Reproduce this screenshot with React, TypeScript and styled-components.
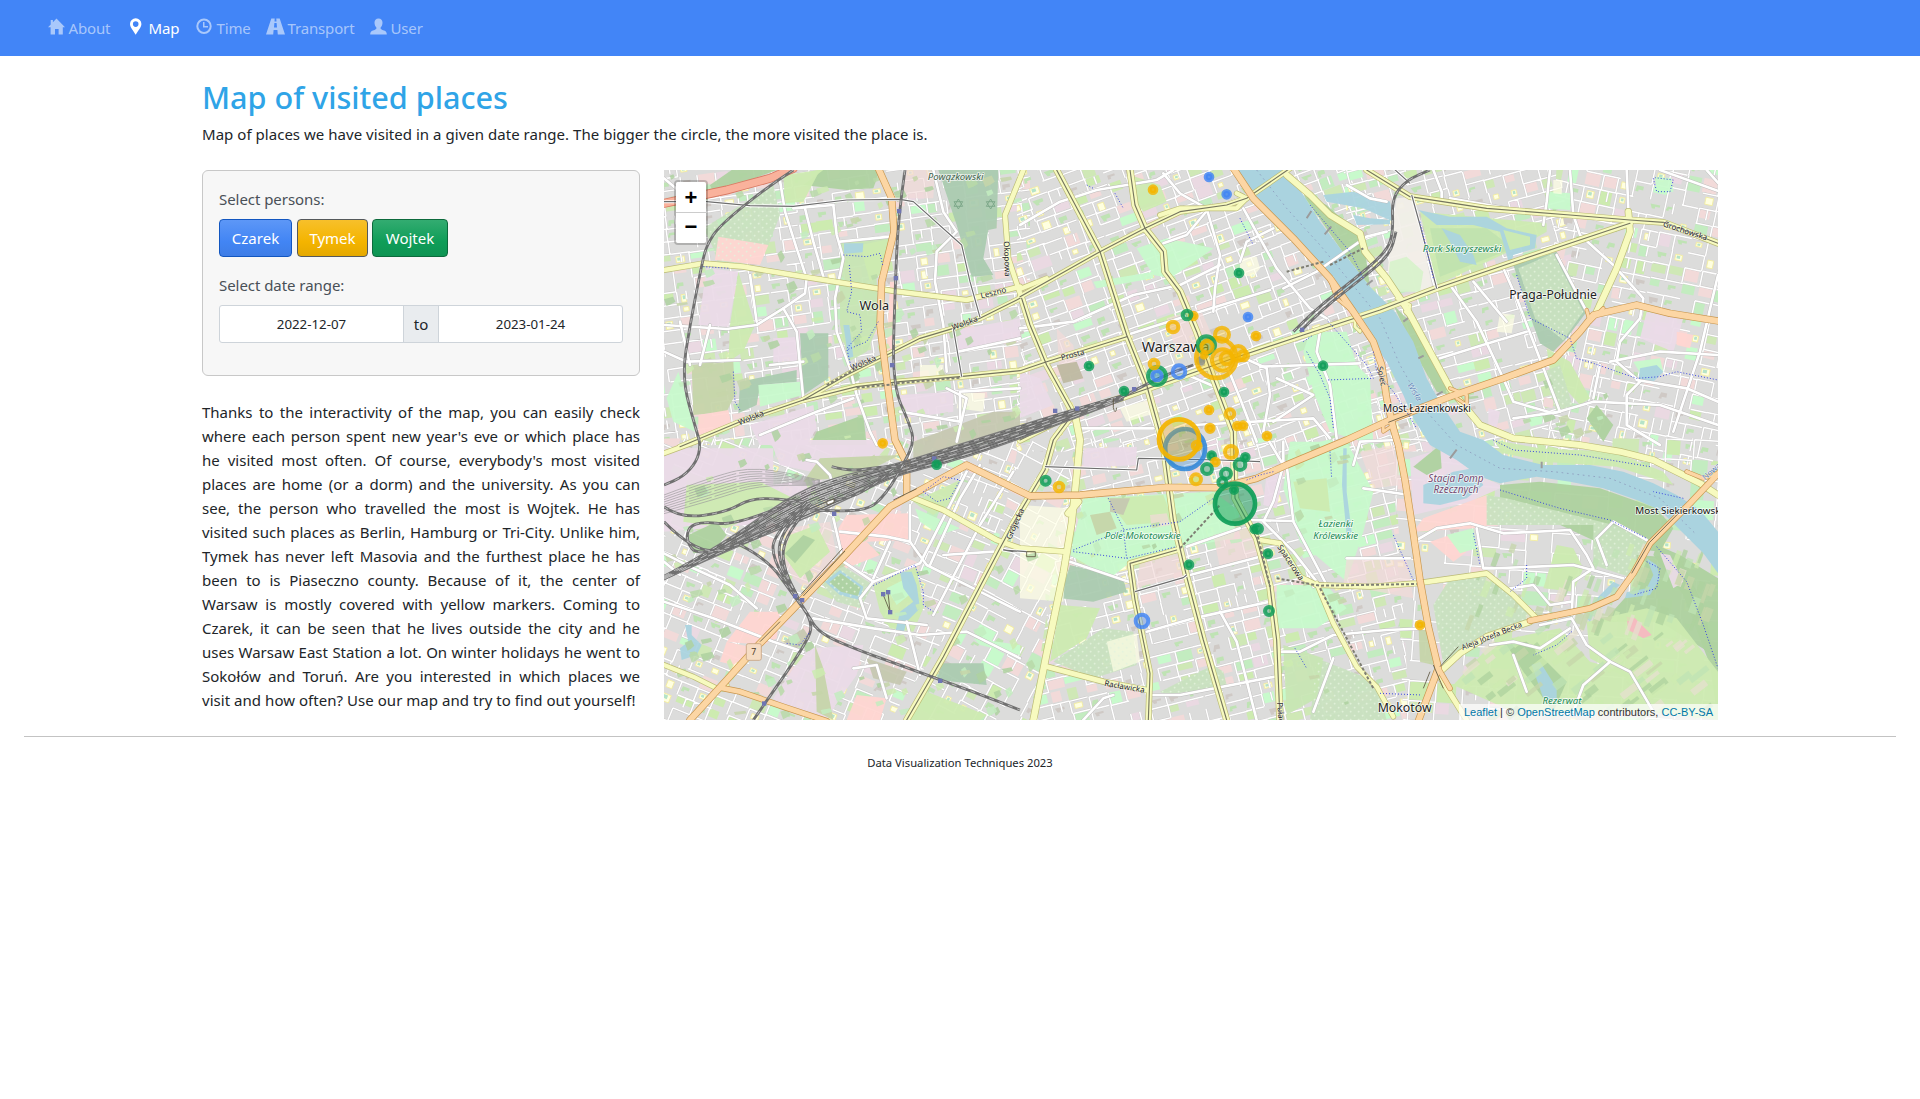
import React from "react";
import styled, { createGlobalStyle } from "styled-components";

const GlobalStyle = createGlobalStyle`
  * { box-sizing: border-box; }
  body {
    margin: 0;
    background: #fff;
    color: #212529;
    font-family: "Segoe UI", "Noto Sans", "Open Sans", sans-serif;
    font-size: 15px;
    line-height: 24px;
  }
`;

/* ---------- page parts ---------- */

const NavBar = styled.nav`
  display: flex;
  align-items: center;
  height: 56px;
  padding: 0 40px;
  background: #4285f7;
`;

const NavLink = styled.a<{ $active?: boolean; $width: number }>`
  display: flex;
  align-items: center;
  gap: 4px;
  width: ${(p) => p.$width}px;
  padding: 0 8px;
  color: ${(p) => (p.$active ? "#fff" : "rgba(255, 255, 255, 0.55)")};
  letter-spacing: -0.15px;
  white-space: nowrap;
  text-decoration: none;
  svg {
    flex: none;
    width: 17px;
    height: 17px;
    margin-top: -3px;
    margin-right: -0.5px;
    fill: currentColor;
  }
`;

const Container = styled.main`
  width: 1516px;
  margin: 0 auto;
`;

const Title = styled.h1`
  margin: 0;
  padding-top: 22px;
  color: #2fa4e7;
  font-size: 30.6px;
  font-weight: 500;
  line-height: 38px;
`;

const Lead = styled.p`
  margin: 6px 0 24px;
  letter-spacing: 0.035px;
`;

const Columns = styled.div`
  display: grid;
  grid-template-columns: 438px 1054px;
  column-gap: 24px;
`;

const Panel = styled.section`
  height: 206px;
  padding: 16px 16px;
  border: 1px solid #c8c8c8;
  border-radius: 6px;
  background: #f7f7f7;
`;

const Label = styled.div`
  height: 24px;
  margin-bottom: 8px;
  color: #495057;
  letter-spacing: -0.05px;
`;

const ButtonRow = styled.div`
  display: flex;
  height: 38px;
  margin-bottom: 16px;
`;

const PersonButton = styled.button<{ $bg: string; $line: string; $width: number; $gap: number }>`
  width: ${(p) => p.$width}px;
  height: 38px;
  margin-right: ${(p) => p.$gap}px;
  padding: 0;
  border: 1px solid ${(p) => p.$line};
  border-radius: 4px;
  background: ${(p) => p.$bg};
  color: #fff;
  font: inherit;
`;

const DateRange = styled.div`
  display: grid;
  grid-template-columns: 183px 36px 183px;
  width: 404px;
  height: 38px;
  border: 1px solid #ced4da;
  border-radius: 3px;
  overflow: hidden;
  background: #fff;
  text-align: center;
  line-height: 37px;
`;

const DateCell = styled.span`
  font-size: 13.3px;
`;

const DateJoin = styled.span`
  border: solid #ced4da;
  border-width: 0 1px;
  background: #e9ecef;
`;

const Story = styled.p`
  margin: 24px 0 0;
`;

const StoryLine = styled.span<{ $last?: boolean }>`
  display: block;
  height: 24px;
  white-space: nowrap;
  text-align: justify;
  text-align-last: ${(p) => (p.$last ? "left" : "justify")};
  letter-spacing: ${(p) => (p.$last ? "0.04px" : "0")};
`;

const MapFrame = styled.section`
  position: relative;
  height: 550px;
  overflow: hidden;
  background: #ddd;
`;

const MapSvg = styled.svg`
  display: block;
  width: 1054px;
  height: 550px;
  font-family: "Noto Sans", sans-serif;
`;

const ZoomControl = styled.div`
  position: absolute;
  top: 10px;
  left: 10px;
  width: 34px;
  border: 2px solid rgba(0, 0, 0, 0.2);
  border-radius: 4px;
  background-clip: padding-box;
`;

const ZoomButton = styled.button<{ $upper?: boolean }>`
  display: flex;
  align-items: center;
  justify-content: center;
  width: 30px;
  height: ${(p) => (p.$upper ? 31 : 30)}px;
  padding: ${(p) => (p.$upper ? "2px 0 0" : "0 0 2px")};
  border: 0;
  border-bottom: ${(p) => (p.$upper ? "1px solid #ccc" : "0")};
  border-radius: ${(p) => (p.$upper ? "2px 2px 0 0" : "0 0 2px 2px")};
  background: #fff;
  color: #000;
  font: bold 22px/28px "Liberation Sans", Arial, sans-serif;
`;

const Attribution = styled.div`
  position: absolute;
  right: 0;
  bottom: 0;
  padding: 0 5px;
  background: rgba(255, 255, 255, 0.7);
  color: #333;
  font: 11px/16px "Liberation Sans", Arial, sans-serif;
  white-space: nowrap;
  a { color: #0078a8; text-decoration: none; }
`;

const Footer = styled.footer`
  margin: 16px 24px 0;
  padding-top: 14px;
  border-top: 1px solid #c3c3c3;
  font-size: 11.25px;
  text-align: center;
`;

/* ---------- map data (three units per pixel) ---------- */

type District = { clip: string; x: number; y: number; w: number; h: number; angle: number; gx: number; gy: number };

const districts: District[] = [
  { clip: "0,0 1110,0 1110,840 0,840", x: 0, y: 0, w: 1110, h: 840, angle: -8, gx: 56, gy: 38 },
  { clip: "1070,0 2100,0 2300,860 1070,860", x: 1070, y: 0, w: 1200, h: 860, angle: -20, gx: 60, gy: 36 },
  { clip: "2050,0 2700,0 2760,500 2680,860 2100,860", x: 2050, y: 0, w: 760, h: 860, angle: -15, gx: 56, gy: 40 },
  { clip: "2690,0 3180,0 3180,900 2640,900", x: 2640, y: 0, w: 560, h: 900, angle: 12, gx: 50, gy: 46 },
  { clip: "0,820 1080,820 1000,1200 680,1680 0,1680", x: 0, y: 820, w: 1080, h: 860, angle: 22, gx: 54, gy: 42 },
  { clip: "1080,820 1000,1200 740,1680 1140,1680 1280,860", x: 740, y: 820, w: 540, h: 860, angle: 28, gx: 60, gy: 46 },
  { clip: "1240,820 2200,820 2250,1680 1110,1680", x: 1110, y: 820, w: 1150, h: 860, angle: -14, gx: 56, gy: 38 },
  { clip: "2200,820 3180,820 3180,1680 2230,1680", x: 2200, y: 820, w: 1000, h: 860, angle: 4, gx: 80, gy: 60 },
];

const areas: [string, string][] = [
  ["#aed1a0", "12,100 60,90 200,70 350,15 215,15 150,60 40,95"],
  ["#c9e1bf", "130,190 340,60 360,150 325,240 240,300 175,300 160,250"],
  ["#ffd6d1", "175,215 325,240 300,300 165,285"],
  ["#aed1a0", "490,15 660,15 640,70 560,75 430,60"],
  ["#cdebb0", "370,30 480,15 430,110 375,115"],
  ["#ebdbe8", "140,310 235,320 205,485 115,480"],
  ["#cdebb0", "235,320 285,480 250,560 205,590 210,480"],
  ["#c8e6b4", "540,230 690,220 650,340 655,480 620,560 565,590 540,480"],
  ["#cdebb0", "600,240 690,222 660,330 630,350"],
  ["#aad3df", "552,235 610,235 608,262 552,266"],
  ["#aad3df", "550,480 568,480 580,575 565,580"],
  ["#aacbaf", "835,15 1015,15 1010,190 985,195 970,280 1000,330 935,335 890,180"],
  ["#f2dad9", "735,15 825,15 820,100 730,100"],
  ["#ffd6d1", "690,350 712,350 700,570 680,560"],
  ["#ebdbe8", "895,495 1080,460 1080,520 895,560"],
  ["#ebdbe8", "340,520 430,515 430,590 340,590"],
  ["#aacbaf", "420,505 505,505 505,640 430,690"],
  ["#c6d5a9", "95,600 220,590 225,690 200,740 100,750"],
  ["#c8facc", "55,620 20,700 40,770 105,800 80,700"],
  ["#aacbaf", "240,650 410,615 410,650 300,660 290,720 235,745"],
  ["#c8facc", "295,660 420,650 430,690 300,725"],
  ["#ffd6d1", "115,750 205,735 215,780 115,810"],
  ["#ebdbe8", "270,780 460,720 470,790 440,840 300,840"],
  ["#add19e", "470,800 610,750 620,840 450,840"],
  ["#ebdbe8", "720,690 880,680 880,740 730,760"],
  ["#ffffe5", "780,600 850,600 850,650 780,645"],
  ["#ffffe5", "900,680 975,685 970,740 890,730"],
  ["#c6c8b0", "760,830 1000,740 1080,740 1080,790 860,860 760,890"],
  ["#ebdbe8", "12,850 340,850 340,960 500,930 430,1010 260,1080 12,1100"],
  ["#cdebb0", "80,960 300,950 400,1000 200,1090 70,1070"],
  ["#add19e", "85,1110 170,1070 200,1110 160,1160 100,1165"],
  ["#ebdbe8", "330,825 700,825 640,890 500,930 360,900"],
  ["#c6d5a9", "480,880 720,870 600,930 430,950"],
  ["#ffd6d1", "535,1090 560,1050 750,1045 750,1125 620,1130 660,1170 545,1215"],
  ["#f2dad9", "380,1090 510,1070 530,1170 450,1280 400,1240 365,1180"],
  ["#cdebb0", "390,1110 470,1080 510,1160 420,1240 370,1170"],
  ["#aed1a0", "430,1110 465,1125 405,1195 375,1165"],
  ["#c9e1bf", "480,1250 545,1200 640,1260 600,1330 530,1310"],
  ["#aad3df", "495,1250 540,1215 610,1265 600,1305 540,1290"],
  ["#aed1a0", "508,1252 542,1225 602,1268 594,1293 543,1280"],
  ["#ffd6d1", "270,1340 360,1340 350,1420 310,1440 200,1430"],
  ["#ffd6d1", "200,1430 290,1450 220,1500 180,1490"],
  ["#ebdbe8", "450,1450 610,1440 590,1530 540,1600 500,1665 380,1640 340,1600 400,1510"],
  ["#c6d5a9", "465,1440 490,1510 520,1665 470,1640"],
  ["#c6c8b0", "370,1430 430,1390 450,1420 410,1450"],
  ["#ffd6d1", "590,1590 680,1600 660,1665 560,1665"],
  ["#c6c8b0", "620,1480 740,1520 720,1560 640,1540"],
  ["#aad3df", "75,1380 95,1380 95,1410 125,1440 110,1470 65,1485 60,1450 85,1430"],
  ["#cdebb0", "640,1260 770,1205 790,1330 760,1400 690,1390 660,1340"],
  ["#c8facc", "680,1270 740,1240 760,1280 710,1320"],
  ["#aad3df", "720,1220 755,1220 770,1260 780,1330 740,1370 730,1405 706,1400 720,1340 760,1310 730,1270"],
  ["#cdebb0", "760,1010 900,945 900,1000 820,1050 780,1025"],
  ["#c8facc", "765,1030 900,1090 840,1110 780,1070"],
  ["#aacbaf", "845,1495 970,1495 980,1560 830,1545"],
  ["#cdebb0", "800,1580 980,1650 960,1665 750,1665"],
  ["#c8facc", "940,1420 1080,1440 1080,1470 960,1440"],
  ["#c8facc", "1430,250 1520,220 1660,250 1590,300 1530,340 1480,330"],
  ["#cdebb0", "1410,30 1500,60 1520,110 1450,140 1420,100"],
  ["#c8facc", "1300,350 1480,320 1480,340 1310,370"],
  ["#ffffe5", "1740,280 1790,275 1800,310 1780,335 1740,330"],
  ["#f2dad9", "1520,460 1620,430 1660,520 1550,570"],
  ["#f2dad9", "1190,490 1240,540 1250,620 1200,650"],
  ["#bdb9a0", "1190,600 1250,590 1270,640 1210,655"],
  ["#c8facc", "1950,500 2060,500 2090,600 2130,640 2140,840 2010,800 1960,680 1930,560"],
  ["#ffffe5", "1380,730 1480,700 1500,740 1400,770"],
  ["#ebdbe8", "1080,620 1140,640 1180,720 1080,760"],
  ["#ebdbe8", "1270,850 1430,845 1430,900 1270,910"],
  ["#c8facc", "1270,1000 1660,980 1740,1040 1720,1120 1560,1150 1400,1200 1350,1240 1230,1170"],
  ["#cdebb0", "1340,1000 1510,990 1540,1070 1400,1080"],
  ["#c6d5a9", "1290,1050 1350,1040 1370,1090 1310,1110"],
  ["#c6c8b0", "1350,1000 1410,1000 1390,1050 1350,1040"],
  ["#f2dad9", "1470,1050 1520,1045 1530,1080 1475,1090"],
  ["#f2dad9", "1440,1190 1570,1160 1570,1230 1430,1270"],
  ["#aacbaf", "1230,1200 1390,1240 1400,1280 1300,1310 1200,1300"],
  ["#cdebb0", "1200,1320 1320,1330 1280,1420 1170,1490"],
  ["#c9e1bf", "1180,1490 1330,1390 1420,1400 1430,1500 1300,1540"],
  ["#ffffe5", "1340,1430 1430,1405 1440,1490 1360,1520"],
  ["#ffffe5", "1230,1030 1080,1020 1080,1300 1210,1310"],
  ["#c9e1bf", "1500,1580 1660,1500 1690,1520 1700,1560 1520,1590"],
  ["#f2dad9", "1660,1110 1790,1080 1800,1170 1680,1210"],
  ["#c8facc", "1890,830 2060,830 2140,980 2110,1100 2060,1250 1920,1130 1870,970"],
  ["#cdebb0", "1900,950 2000,940 2010,1040 1920,1030"],
  ["#aad3df", "2050,850 2060,850 2060,980 2075,1100 2060,1110 2046,960"],
  ["#ebdbe8", "1820,920 1870,930 1850,1030 1810,1020"],
  ["#f2dad9", "2100,860 2200,840 2225,960 2140,970"],
  ["#f2dad9", "2060,1180 2240,1180 2260,1300 2050,1260"],
  ["#c8facc", "1850,1260 2000,1260 2060,1330 1970,1390 1850,1390"],
  ["#c9e1bf", "1970,1480 2150,1550 2180,1665 1950,1665"],
  ["#c8e6b4", "1870,1440 1990,1480 1970,1600 1880,1650"],
  ["#f2efe9", "2210,100 2260,95 2320,380 2180,370 2190,220"],
  ["#d8f2cc", "2190,290 2240,275 2290,320 2280,380 2210,380 2185,340"],
  ["#cdebb0", "2280,140 2660,175 2660,200 2590,240 2330,360"],
  ["#c0e2ae", "2310,190 2480,190 2560,250 2340,335"],
  ["#aad3df", "2275,135 2370,155 2480,155 2540,190 2630,210 2625,250 2560,270 2550,305 2520,200 2440,180 2330,180"],
  ["#cdebb0", "2530,195 2610,215 2610,240 2550,255"],
  ["#aad3df", "2345,190 2400,210 2440,270 2450,300 2400,290 2370,230"],
  ["#aacbaf", "2560,300 2690,260 2780,440 2720,520 2680,560 2640,535 2620,480"],
  ["#c9e1bf", "2575,310 2680,265 2770,440 2710,525 2625,460"],
  ["#cdebb0", "2660,550 2730,590 2790,700 2760,720 2670,620"],
  ["#c9e1bf", "2650,620 2700,600 2740,730 2690,740"],
  ["#c8facc", "2660,80 2735,85 2730,135 2655,130"],
  ["#ffffe5", "2680,45 2708,45 2705,88 2680,85"],
  ["#c8facc", "2985,35 3035,40 3040,80 2990,85"],
  ["#ebdbe8", "2960,440 3070,460 3040,560 2940,520"],
  ["#ffd6d1", "3050,500 3100,510 3090,550 3050,540"],
  ["#ffffe5", "2520,445 2565,450 2555,505 2510,500"],
  ["#add19e", "2810,720 2860,780 2830,830 2780,760"],
  ["#c8facc", "2920,590 3000,580 3010,620 2950,640"],
  ["#aad3df", "2940,610 2990,600 3010,620 2980,650 2935,645"],
  ["#ebdbe8", "2485,730 2520,740 2510,790 2485,780"],
  ["#add19e", "2200,420 2260,480 2320,600 2370,690 2330,680 2280,590"],
  ["#add19e", "1930,90 2000,120 2110,220 2130,365 2040,250"],
  ["#aad3df", "1990,90 2080,80 2190,110 2200,170 2110,130 2000,110"],
  ["#aad3df", "2080,150 2130,160 2190,165 2190,178 2090,180"],
  ["#ebdbe8", "2250,880 2350,850 2440,920 2530,965 2430,1010 2260,1050"],
  ["#aad3df", "2290,960 2380,920 2440,910 2470,960 2420,1000 2340,1020 2290,1015"],
  ["#ffd6d1", "2290,1060 2480,990 2490,1080 2440,1090 2260,1100"],
  ["#ffd6d1", "2310,1130 2370,1110 2420,1160 2380,1190"],
  ["#c8facc", "2360,1110 2440,1090 2450,1150 2400,1165"],
  ["#add19e", "2520,960 2640,950 2820,970 2990,1030 3040,1090 3000,1160 2830,1140 2680,1070 2520,1000"],
  ["#c9e1bf", "2480,990 2540,1000 2900,1090 2970,1130 2920,1240 2800,1200 2800,1080 2480,1080"],
  ["#c9e1bf", "2370,1240 2480,1230 2560,1300 2630,1360 2400,1460 2350,1500 2320,1320"],
  ["#add19e", "2990,1140 3060,1170 3174,1240 3174,1665 3150,1500 3070,1290 2980,1170"],
  ["#add19e", "2930,1170 3060,1180 3130,1320 3160,1470 3000,1370 2830,1370 2930,1260"],
  ["#cdebb0", "2780,1370 2960,1330 3050,1360 3174,1520 3174,1665 2960,1640 2900,1540 2790,1480"],
  ["#cdebb0", "2500,1430 2700,1390 2790,1490 2900,1520 2960,1640 2560,1640 2380,1560"],
  ["#add19e", "2540,1440 2600,1430 2670,1500 2720,1550 2680,1640 2650,1600 2590,1520"],
  ["#aad3df", "2615,1500 2640,1490 2690,1570 2690,1610 2650,1600"],
  ["#aad3df", "2960,1180 2990,1200 3000,1240 2970,1290 2895,1300 2900,1282 2960,1270 2980,1230"],
  ["#aad3df", "2780,1360 2800,1310 2860,1250 2880,1260 2810,1320 2790,1370"],
  ["#ebdbe8", "3000,1165 3030,1170 3070,1250 3040,1270"],
  ["#f8b8c0", "2900,1355 2925,1360 2975,1410 2950,1420 2905,1395"],
  ["#cdebb0", "2690,1140 2740,1150 2770,1210 2740,1280 2650,1270"],
  ["#cdebb0", "2500,825 2640,850 2860,860 3010,920 3040,960 2870,905 2650,890 2530,865"],
  ["#c6d5a9", "2275,1370 2310,1370 2320,1500 2280,1490"],
  ["#add19e", "2340,840 2345,910 2300,930 2260,905"],
];

const river =
  "1720,15 1790,110 1900,215 1980,290 2020,335 2080,430 2130,520 2180,590 2230,690 2260,760 2310,840 2390,885 2460,935 2520,955 2630,935 2730,950 2830,970 2930,1005 3000,1035 3060,1095 3130,1165 3174,1225 3174,1100 3120,1035 3050,990 2980,955 2890,920 2790,900 2650,900 2530,870 2470,825 2400,800 2345,720 2300,640 2260,530 2205,440 2130,365 2040,250 1980,170 1930,90 1870,15";

const whiteRoads = [
  "12,40 60,80", "355,15 375,140 410,250 440,340 435,385 370,430 290,480 200,492 12,480",
  "370,430 410,500 430,700", "435,130 460,230 490,335", "520,120 530,210 550,280 525,400 530,500 570,610 590,690 630,800 650,840",
  "820,15 850,140 890,200 830,260 825,350 850,480 860,620", "400,130 520,120", "540,230 690,215",
  "12,560 80,590 240,585", "430,590 330,600", "580,700 470,740 300,810", "895,560 1080,520", "720,740 900,770 900,680 1080,670",
  "860,670 920,700 890,830", "60,470 90,600", "150,480 120,600", "270,330 290,470", "1080,180 1200,110 1310,75 1490,45 1540,15",
  "1080,490 1240,470 1420,390 1560,360 1680,300", "1510,25 1560,85 1640,130 1680,270 1665,370 1660,440", "1510,235 1580,210 1655,120",
  "1750,130 1800,220 1850,310 1950,430 2000,460", "1870,370 1970,320 2120,215 2180,200", "1400,510 1620,440 1830,375",
  "1840,190 1760,230 1740,290", "1700,600 1740,700 1790,830", "1720,565 1820,610 1830,690 1810,800 1870,900", "1800,605 1950,600 2100,595",
  "1980,500 1970,560 2010,660 2030,820", "1560,620 1700,570", "1440,650 1560,620 1700,680", "1260,790 1480,790",
  "1600,780 1960,760 2010,820", "1840,770 1960,690 1850,640", "1870,830 1870,900 1840,1010 1810,1070 1900,1160 1970,1250 1960,1265",
  "1880,900 1900,1070 2000,1260", "1760,1065 1900,1068", "1580,1145 1740,1090", "1590,1230 1800,1175", "1460,1400 1600,1360 1830,1310",
  "1470,1590 1560,1590 1870,1530", "1680,1340 1730,1430 1790,1665", "1230,1190 1420,1255", "1360,1590 1330,1600 1270,1665",
  "1860,1460 1920,1460 2020,1410 2180,1395 2300,1390", "2020,1480 1960,1640", "2110,970 2250,990", "2060,1180 2250,1180",
  "2210,825 2100,830 2080,900", "2180,110 2130,100 2060,60", "2320,15 2345,80 2345,110", "2370,100 2540,130 2620,145",
  "2730,15 2740,150 2760,210 2860,300 2950,400 2940,460 2880,530 2870,590", "2670,15 2660,110 2650,180", "2900,15 2905,130",
  "3140,15 3180,60", "3000,15 3180,80", "3174,330 3120,560 3040,800", "2850,590 3000,560 3174,570", "2530,310 2570,400 2620,530 2700,740 2560,760",
  "2370,360 2450,470 2530,640 2560,710 2680,745 2800,710 3000,720 3174,780", "2340,580 2500,530 2600,500", "2440,350 2540,470",
  "2820,600 2800,700", "2870,590 2940,650 2900,690 2900,780 3000,840", "2930,645 3080,670 3174,710", "2690,270 2780,440",
  "2270,1125 2330,1090 2430,1075 2530,1105 2730,1095 2780,1170 2800,1210 2740,1250 2735,1350", "2450,1090 2470,1210 2500,1210 2740,1200 2890,1240",
  "2550,1270 2620,1260 2670,1320 2735,1310", "2810,1120 2860,1070 2960,1125", "2810,1120 2840,1200", "2640,1380 2735,1360 2780,1440 2850,1490 2910,1520 2980,1640",
  "2490,1440 2560,1430 2640,1450 2730,1390", "2850,1490 2770,1560 2740,1640", "2560,1470 2600,1580",
  "12,1165 100,1210 210,1260 290,1330", "12,1310 160,1360 340,1430 430,1460", "440,885 470,890 510,930 530,1010", "12,1190 60,1230",
  "540,1100 680,1115 750,1130 800,1200 960,1280 1080,1340", "640,1250 780,1195 870,1020 920,920", "520,1060 550,1190 640,1250",
  "750,1020 750,1130", "810,1200 900,1000 960,900", "850,1170 1000,1160", "460,1360 640,1390 780,1410 920,1400 1080,1480",
  "640,1250 600,1300 620,1360 800,1380", "690,1130 640,1240", "820,1350 960,1080 1060,920", "580,1510 650,1500 680,1600", "740,1370 780,1530",
];

type Road = { d: string; w?: number; tram?: boolean };

const yellowRoads: Road[] = [
  { d: "12,315 130,295 250,305 430,335 700,378 920,405 1080,365" },
  { d: "1080,372 1160,340", w: 14 },
  { d: "1080,395 1160,350 1320,260 1455,190 1560,140 1700,120 1760,100 1890,10", tram: true },
  { d: "1500,150 1560,130 1730,130 1760,100 1730,85", w: 14 },
  { d: "60,845 240,770 430,705 560,630 700,560 780,520 880,490 960,460 1080,400", tram: true },
  { d: "430,705 590,665 720,650 900,635 1080,617 1160,590 1400,515", w: 16, tram: true },
  { d: "1090,15 1035,150 1045,280 1080,385" },
  { d: "1085,400 1110,480 1160,600 1240,745 1180,825 1155,915 1060,1075 1020,1150 850,1475 740,1665", w: 18, tram: true },
  { d: "1245,750 1260,825 1250,930 1235,1075 1210,1225 1160,1465 1120,1665", w: 20 },
  { d: "1190,15 1320,260 1400,510 1460,660 1510,840 1540,1065 1580,1235 1630,1425 1700,1665", w: 18, tram: true },
  { d: "1410,15 1425,120 1455,190 1510,260 1515,320 1560,380 1610,500 1660,640 1720,800 1725,1000 1790,1120 1830,1265 1850,1425 1860,1665", w: 19, tram: true },
  { d: "1080,825 1240,745 1380,700 1580,630 1720,580 1930,510 2160,435 2330,370 2550,295 2730,235 2910,175", w: 18, tram: true },
  { d: "1880,30 1950,90 2010,150 2100,205 2115,260 2180,340 2240,430 2310,560 2370,670 2460,780 2560,820 2680,832 2760,840 2880,860 2980,885 3120,955 3174,990", w: 19 },
  { d: "2120,15 2250,95 2480,130 2730,150 2910,165 3010,172 3174,235", w: 17, tram: true },
  { d: "2905,140 2910,200 2870,310 2810,440", w: 19 },
  { d: "750,995 850,1035 1010,1125 1080,1150 1220,1160", w: 16 },
  { d: "1255,1010 1225,1045", w: 20 },
  { d: "1550,1155 1410,1195 1425,1305 1470,1525 1465,1665", w: 16, tram: true },
  { d: "1160,1505 1330,1550 1460,1575", w: 16 },
  { d: "1800,1125 1860,1135 1920,1235 1970,1260 2130,1265 2270,1255 2480,1225 2560,1290 2630,1360", w: 15 },
  { d: "1970,1255 2020,1375 2090,1505 2150,1565 2200,1655", w: 14 },
  { d: "2330,1520 2420,1665", w: 16 },
  { d: "12,1500 100,1535 170,1570 200,1560", w: 14 },
  { d: "12,865 120,825", w: 14 },
  { d: "2330,1530 2400,1465 2480,1415 2610,1370", w: 18 },
  { d: "2210,400 2250,420 2245,450 2235,440", w: 9 },
  { d: "2080,460 2110,480 2100,500 2085,485 2085,455", w: 9 },
];

const orangeRoads: Road[] = [
  { d: "655,10 695,100 702,200 665,350 660,480 680,640 705,825 740,895 740,985", w: 19 },
  { d: "90,1665 200,1545 300,1435 430,1300 560,1165 690,1025 920,900 1110,993 1260,990 1520,967 1680,968 1790,940 1880,900 2060,825 2190,765 2370,695 2530,640 2680,585 2760,500 2800,450 2930,420 3030,445 3174,468", w: 19 },
  { d: "180,1568 240,1580 370,1625 500,1668", w: 16 },
  { d: "1720,10 1780,100 1900,220 2010,340 2080,440 2140,530 2165,600 2180,700 2200,790 2215,840 2235,945 2260,1105 2280,1245 2305,1385 2335,1510 2275,1668", w: 19 },
  { d: "3180,920 3090,1015 2970,1135 2920,1225 2870,1295 2790,1330 2610,1367", w: 17 },
  { d: "2335,1510 2370,1570", w: 14 },
  { d: "3080,920 3130,940 3174,925", w: 11 },
  { d: "2370,670 2420,690 2420,720 2390,700", w: 9 },
  { d: "2190,750 2200,780 2170,800 2170,770", w: 9 },
  { d: "2010,345 2030,400 2090,450", w: 9 },
  { d: "2780,435 2790,470 2830,430", w: 10 },
];

const rails = [
  "400,15 330,60 180,180 140,240 125,300 90,480 65,640 110,800 122,840 110,890 70,935 12,960",
  "735,15 715,150 705,380 697,660 750,780 762,830 735,890 680,985 620,1040 450,1035",
  "12,1025 60,1060 200,1042 280,995 430,1010",
  "12,1070 110,1170 240,1140 350,1090 440,1010",
  "190,1155 110,1170 80,1130 85,1085 130,1070 220,1080 420,1005",
  "240,1140 320,1180 400,1290 460,1370 440,1435 280,1665",
  "440,1020 370,1090 350,1180 410,1290",
  "420,1030 340,1110 338,1180 400,1285",
  "455,1015 400,1080 366,1150 375,1220 415,1300",
  "400,1280 445,1350 470,1395 540,1435 800,1530 940,1580 1080,1635",
  "515,905 570,920 660,905 730,905",
  "500,1010 570,1000 640,960 700,915",
  "1380,700 1490,640 1600,600",
  "1900,500 1970,430 2080,345 2180,260 2200,200 2195,100 2240,45 2310,15",
  "1920,500 1990,430 2100,345 2190,270 2208,200",
];

const yardLines: string[] = [];
for (let i = -6; i <= 6; i++) {
  const o = i * 5;
  yardLines.push(
    `12,${1238 + i} 180,${1155 + o * 0.4} 400,${1030 + o * 1.5} 560,${965 + o * 1.3} 700,${917 + o * 0.55} 860,${872 + o * 0.75} 1020,${822 + o * 0.7} 1240,${747 + o * 0.5} 1390,${697 + o * 0.25}`
  );
}
const sidings: string[] = [];
for (let i = 0; i < 9; i++) {
  sidings.push(`12,${990 + i * 7} 170,${930 + i * 9} 290,${905 + i * 7} 480,${945 + i * 2}`);
}

const tramLines = [
  "12,110 140,110 270,122 400,124 560,105 720,103 760,110 905,240 930,350 960,457",
  "880,490 905,635", "1155,905 1430,915 1435,880 1680,885 1800,890", "1425,1280 1570,1238 1580,1230",
  "2255,90 2280,180 2330,370", "1060,1160 1030,1155 1100,1160",
  "2250,55 2200,10",
];

const paths = [
  "550,270 620,275 660,265 668,300", "568,300 575,380 560,440 600,450 605,500 560,550 572,600", "655,470 620,530 560,555",
  "790,980 850,935 900,945 870,1000 830,1010 790,980", "640,1262 765,1200 790,1280 790,1320 820,1340",
  "1240,1155 1390,1095 1560,1070 1660,1000", "1240,1160 1400,1180 1550,1145", "1345,1000 1390,1090 1400,1180",
  "1280,60 1300,70", "1365,85 1390,130", "1950,120 2010,190 2070,260 2110,340", "1740,160 1780,240", "1930,530 1960,510", "1940,560 1980,630 2010,700 2020,790",
  "2005,470 2120,600 2140,640 2000,645", "2570,330 2610,460 2730,520 2750,580 2800,595 2930,640 3000,635 3050,620 3174,645",
  "2280,170 2320,340", "2260,1245 2200,1110", "2520,975 2700,1030 2850,1065 2960,1120", "2990,1145 3080,1250 3130,1380 3174,1510",
  "2960,1190 3000,1210 2990,1270 2920,1290", "2440,1105 2460,1200", "2600,1200 2600,1240 2550,1280", "2735,1400 2690,1440 2620,1470",
  "2500,825 2560,855 2760,870 2970,905", "1840,920 1800,930 1760,945", "2010,860 2015,940", "1905,1450 1940,1510",
  "2140,560 2150,620 2200,680 2240,740 2270,790", "2160,1585 2285,1590", "2980,40 2990,80 3030,80 3040,45 2985,38", "3070,1000 2980,980",
  "220,620 225,710 240,735", "380,1435 420,1440 450,1400", "130,305 210,310",
];

const tunnels = ["500,660 590,610", "590,668 700,658", "710,655 900,638", "1560,1150 1680,1020", "1880,320 1990,290", "2010,300 2110,250", "1790,1100 1830,1265", "1850,1240 1980,1262 2270,1257", "1980,1270 2060,1420 2140,1570"];

type MapLabel = { t: string; x: number; y: number; s: number; r?: number; c?: string; i?: boolean; start?: boolean };

const labels: MapLabel[] = [
  { t: "Powązkowski", x: 887, y: 45, s: 29, i: true, c: "#40634c" },
  { t: "Wola", x: 643, y: 435, s: 38 },
  { t: "Warszawa", x: 1445, y: 560, s: 43, start: true },
  { t: "Praga-Południe", x: 2679, y: 403, s: 36.5 },
  { t: "Mokotów", x: 2234, y: 1641, s: 37 },
  { t: "Most Łazienkowski", x: 2301, y: 740, s: 30, c: "#111" },
  { t: "Most Siekierkowski", x: 2926, y: 1047, s: 29.5, c: "#111", start: true },
  { t: "Park Skaryszewski", x: 2406, y: 260, s: 29.5, i: true, c: "#208a55" },
  { t: "Pole Mokotowskie", x: 1448, y: 1121, s: 29, i: true, c: "#208a55" },
  { t: "Łazienki", x: 2027, y: 1087, s: 29, i: true, c: "#208a55" },
  { t: "Królewskie", x: 2027, y: 1122, s: 29, i: true, c: "#208a55" },
  { t: "Stacja Pomp", x: 2388, y: 950, s: 30, i: true, c: "#734a6f" },
  { t: "Rzecznych", x: 2388, y: 985, s: 30, i: true, c: "#734a6f" },
  { t: "Rezerwat", x: 2706, y: 1617, s: 29, i: true, c: "#208a55" },
  { t: "Wolska", x: 276, y: 766, s: 24, r: -22 },
  { t: "Wolska", x: 613, y: 601, s: 24, r: -24 },
  { t: "Wolska", x: 917, y: 482, s: 24, r: -20 },
  { t: "Leszno", x: 1002, y: 391, s: 24, r: -14 },
  { t: "Okopowa", x: 1033, y: 282, s: 24, r: 88 },
  { t: "Prosta", x: 1240, y: 577, s: 24, r: -15 },
  { t: "Grochowska", x: 3073, y: 205, s: 24, r: 18 },
  { t: "Solec", x: 2157, y: 635, s: 24, r: 78 },
  { t: "Wisła", x: 2257, y: 685, s: 25, r: 58, c: "#5d83b5", i: true },
  { t: "Grójecka", x: 1073, y: 1080, s: 24, r: -66 },
  { t: "Spacerowa", x: 1885, y: 1197, s: 24, r: 56 },
  { t: "Racławicka", x: 1392, y: 1573, s: 24, r: 10 },
  { t: "Puławska", x: 1855, y: 1665, s: 24, r: 86 },
  { t: "Aleja Józefa Becka", x: 2498, y: 1420, s: 23, r: -22 },
  { t: "Nowa", x: 3160, y: 925, s: 24, r: -42, c: "#5d83b5" },
];

const BLUE = "#4285f4";
const GOLD = "#f4b400";
const GREEN = "#0f9d58";

/* x, y, outer radius, colour */
const markers: [number, number, number, string][] = [
  [668, 835, 16, GOLD], [830, 899, 16, GREEN], [1479, 74, 16, GOLD], [1647, 36, 16, BLUE], [1700, 88, 16, BLUE],
  [1737, 324, 16, GREEN], [1287, 603, 16, GREEN], [1989, 602, 16, GREEN], [1157, 947, 18, GREEN], [1197, 966, 19, GOLD],
  [1587, 1199, 16, GREEN], [1446, 1368, 25, BLUE], [1824, 1166, 16, GREEN], [1827, 1338, 18, GREEN], [2280, 1380, 16, GOLD],
  [1600, 453, 16, GOLD], [1581, 450, 19, GREEN], [1539, 486, 22, GOLD], [1764, 456, 16, BLUE], [1788, 513, 16, GOLD],
  [1686, 509, 27, GOLD], [1639, 540, 32, GREEN], [1641, 545, 23, GOLD], [1632, 570, 14, GOLD],
  [1688, 585, 38, GOLD], [1700, 580, 24, GOLD], [1735, 565, 28, GOLD], [1750, 572, 20, GOLD],
  [1491, 633, 33, GREEN], [1491, 632, 20, BLUE], [1482, 597, 19, GOLD], [1557, 620, 25, BLUE], [1392, 678, 16, GREEN],
  [1692, 681, 16, GREEN], [1647, 735, 16, GOLD], [1710, 746, 19, GOLD], [1650, 790, 17, GOLD], [1732, 783, 16, GOLD],
  [1749, 782, 16, GOLD], [1821, 813, 16, GOLD], [1655, 872, 16, GREEN], [1666, 891, 16, GOLD],
  [1713, 861, 24, GOLD], [1610, 842, 18, GOLD], [1756, 877, 16, GREEN], [1740, 899, 22, GREEN], [1641, 912, 21, GREEN],
  [1698, 926, 21, GREEN], [1687, 952, 18, GREEN], [1608, 943, 21, GOLD], [1722, 975, 15, GREEN],
  [1784, 1092, 16, GREEN], [1794, 1091, 18, GREEN],
];

const bigMarkers: [number, number, number, string][] = [
  [1669, 579, 60, GOLD],
  [1575, 852, 60, "#2a85d8"],
  [1557, 823, 60, GOLD],
  [1725, 1016, 60, GREEN],
];

/* Rounds the corners of a list of points into a continuous curve. */
function smooth(points: string) {
  const p = points.split(" ").map((q) => q.split(",").map(Number));
  let d = `M${p[0][0]} ${p[0][1]}`;
  for (let i = 1; i < p.length - 1; i++) {
    const mx = (p[i][0] + p[i + 1][0]) / 2;
    const my = (p[i][1] + p[i + 1][1]) / 2;
    d += `Q${p[i][0]} ${p[i][1]} ${mx} ${my}`;
  }
  const last = p[p.length - 1];
  return d + `L${last[0]} ${last[1]}`;
}

/* ---------- generated street blocks ---------- */

function makeRandom(seed: number) {
  let s = seed;
  return () => {
    s = (s * 1664525 + 1013904223) % 4294967296;
    return s / 4294967296;
  };
}

const blockColors = ["#f2dad9", "#cdebb0", "#c3ecc0", "#f2dad9", "#ead9e2", "#cfe8b6", "#c8facc"];

function DistrictBlocks({ d, index }: { d: District; index: number }) {
  const rnd = makeRandom(91 + index * 17);
  const cx = d.x + d.w / 2;
  const cy = d.y + d.h / 2;
  const half = Math.max(d.w, d.h) * 0.75;
  const cells: React.ReactNode[] = [];
  let streets = "";
  for (let y = cy - half; y < cy + half; y += d.gy) {
    for (let x = cx - half; x < cx + half; x += d.gx) {
      const jx = Math.round(x + (rnd() - 0.5) * 8);
      const jy = Math.round(y + Math.sin(x / 190) * 6);
      const k = rnd();
      const key = `${x}-${y}`;
      if (k < 0.38) {
        const c = blockColors[Math.floor(rnd() * blockColors.length)];
        cells.push(<rect key={key} x={jx} y={jy} width={d.gx * (0.5 + rnd() * 0.5)} height={d.gy * (0.5 + rnd() * 0.5)} fill={c} />);
      } else if (k < 0.54) {
        const w = 12 + rnd() * 14;
        const h = 12 + rnd() * 12;
        cells.push(<rect key={key} x={jx + 12} y={jy + 10} width={w} height={h} fill="#ffffe0" stroke="#f3eda0" strokeWidth="2.5" />);
        if (rnd() < 0.6) cells.push(<rect key={key + "s"} x={jx + 16} y={jy + 13} width={w * 0.5} height={h * 0.5} fill="#b5e3c8" />);
      } else if (k < 0.76) {
        cells.push(<path key={key} d={`M${jx + 8} ${jy + 12}h${14 + rnd() * 18}v${6 + rnd() * 8}h-14v6h-9z`} fill={rnd() < 0.7 ? "#bfe3b4" : "#cfc9c5"} />);
      }
      if (rnd() < 0.66) streets += `M${jx} ${jy}h${d.gx}`;
      if (rnd() < 0.64) streets += `M${jx} ${jy}v${d.gy}`;
      if (rnd() < 0.14) streets += `M${jx + d.gx / 2} ${jy}v${d.gy * 0.7}`;
    }
  }
  return (
    <g clipPath={`url(#district-${index})`}>
      <g transform={`rotate(${d.angle} ${cx} ${cy})`}>
        {cells}
        <path d={streets} stroke="#c9c7c7" strokeWidth="6.5" fill="none" />
        <path d={streets} stroke="#fff" strokeWidth="4.5" fill="none" />
      </g>
    </g>
  );
}

function scatter() {
  const rnd = makeRandom(4242);
  const out: React.ReactNode[] = [];
  const shades = ["#add19e", "#c6d5a9", "#cdebb0", "#e6e0cf", "#bfe3b4"];
  for (let i = 0; i < 150; i++) {
    const x = 2420 + rnd() * 740;
    const y = 1130 + rnd() * 510;
    const w = 8 + rnd() * 16;
    const h = 24 + rnd() * 42;
    out.push(<rect key={i} x={x} y={y} width={w} height={h} fill={shades[i % 5]} opacity="0.75" transform={`rotate(${y > 1370 ? 52 : 20} ${x} ${y})`} />);
  }
  return out;
}

/* Small lawns and groves between the western streets and rail yards. */
function groves() {
  const rnd = makeRandom(733);
  const shades = ["#b9d9a8", "#cdebb0", "#c6d5a9", "#c3ecc0", "#aed1a0"];
  const zones = [[12, 20, 1060, 800], [12, 850, 700, 300], [12, 1170, 1100, 480], [1240, 980, 480, 200], [1860, 840, 220, 780], [2230, 640, 600, 170]];
  const out: React.ReactNode[] = [];
  zones.forEach(([zx, zy, zw, zh], z) => {
    const n = Math.round((zw * zh) / 7500);
    for (let i = 0; i < n; i++) {
      const x = Math.round(zx + rnd() * zw);
      const y = Math.round(zy + rnd() * zh);
      const a = Math.round(10 + rnd() * 24);
      const b = Math.round(6 + rnd() * 16);
      out.push(<path key={`${z}-${i}`} d={`M${x} ${y}l${a} ${-b / 2}l${b / 2} ${b}l${-a / 2} ${b / 2}l${-a / 2} ${b / 3}z`} fill={shades[Math.floor(rnd() * 5)]} opacity="0.85" />);
    }
  });
  return out;
}

function RoadSet({ roads, fill, casing }: { roads: Road[]; fill: string; casing: string }) {
  return (
    <g fill="none" strokeLinejoin="round" strokeLinecap="round">
      {roads.map((r, i) => <polyline key={i} points={r.d} stroke={casing} strokeWidth={(r.w ?? 15) + 3} />)}
      {roads.map((r, i) => <polyline key={i} points={r.d} stroke={fill} strokeWidth={(r.w ?? 15) - 1} />)}
      {roads.filter((r) => r.tram).map((r, i) => <polyline key={i} points={r.d} stroke="#74745f" strokeWidth="3.4" />)}
    </g>
  );
}

function CityMap() {
  return (
    <MapSvg viewBox="12 15 3162 1650" preserveAspectRatio="none">
      <defs>
        {districts.map((d, i) => (
          <clipPath id={`district-${i}`} key={i}><polygon points={d.clip} /></clipPath>
        ))}
        <pattern id="plots" width="24" height="24" patternUnits="userSpaceOnUse">
          <path d="M5 8h6M8 5v6M17 20h6M20 17v6" stroke="#e4f3dc" strokeWidth="2" />
        </pattern>
      </defs>
      <rect x="0" y="0" width="3200" height="1700" fill="#dcdcdb" />
      {districts.map((d, i) => <DistrictBlocks d={d} index={i} key={i} />)}
      {areas.map(([c, p], i) => <polygon key={i} points={p} fill={c} opacity={c === "#f2dad9" || c === "#ffffe5" ? 0.7 : 0.94} />)}
      {areas.filter(([c]) => c === "#c9e1bf").map(([, p], i) => <polygon key={i} points={p} fill="url(#plots)" />)}
      {scatter()}
      {groves()}
      <polygon points={river} fill="#aad3df" />
      <g fill="none" stroke="#8d9bbd" strokeWidth="2.5" strokeDasharray="5 11">
        <polyline points="1790,15 1880,130 1980,240 2070,350 2160,460 2220,600 2300,740 2390,840 2520,910 2680,920 2850,940 3000,1000 3110,1110" />
      </g>
      <g stroke="#9b9b9b" strokeWidth="6">
        <path d="M1940 160l14-22M1994 208l20-24M2230 470l16-12M2275 580l16-8M2330 690l18-10M2120 360l18-14M2370 880l20-26M2645 890v20" />
      </g>

      <g fill="none" strokeLinejoin="round" strokeLinecap="round">
        {whiteRoads.map((p, i) => <polyline key={i} points={p} stroke="#bdbbbb" strokeWidth="10.5" />)}
        {whiteRoads.map((p, i) => <polyline key={i} points={p} stroke="#fff" strokeWidth="8" />)}
      </g>

      <g fill="none" stroke="#9a9a9a" strokeWidth="2">
        {sidings.map((p, i) => <path key={i} d={smooth(p)} strokeDasharray={i % 2 ? "70 9" : undefined} />)}
      </g>

      <RoadSet roads={yellowRoads} fill="#f7fabf" casing="#bcbc76" />
      <g fill="none" strokeLinecap="round">
        <polyline points="12,115 200,75 330,40 400,10" stroke="#d97a63" strokeWidth="27" />
        <polyline points="12,115 200,75 330,40 400,10" stroke="#f9b29c" strokeWidth="22" />
      </g>
      <RoadSet roads={orangeRoads} fill="#fcd6a4" casing="#c9974f" />

      <g fill="none" strokeLinejoin="round">
        {tramLines.map((p, i) => <polyline key={i} points={p} stroke="#fff" strokeWidth="9" />)}
        {tramLines.map((p, i) => <polyline key={i} points={p} stroke="#6e6e6e" strokeWidth="3.5" />)}
        {tunnels.map((p, i) => <polyline key={i} points={p} stroke="#7d7d73" strokeWidth="6" strokeDasharray="9 6" />)}
        {yardLines.map((p, i) => <path key={i} d={smooth(p)} stroke={i % 2 ? "#666" : "#7c7c7c"} strokeWidth="4.2" />)}
        {yardLines.filter((_, i) => i % 3 === 1).map((p, i) => <path key={i} d={smooth(p)} stroke="#e6e6e6" strokeWidth="2" strokeDasharray={`${16 + i * 5} ${17 + i * 3}`} />)}
        {rails.map((p, i) => <path key={i} d={smooth(p)} stroke="#707070" strokeWidth="8.5" />)}
        {rails.map((p, i) => <path key={i} d={smooth(p)} stroke="#ddd" strokeWidth="2" strokeDasharray="15 15" />)}
        {paths.map((p, i) => <polyline key={i} points={p} stroke="#3a46e0" strokeWidth="3" strokeDasharray="3 6" />)}
      </g>
      <g fill="none" stroke="#5d5540" strokeWidth="2.5">
        <path d="M430 1293L555 1158M423 1288L548 1150M300 1430l60-60M700 1005l70-34M3070 1030L2968 1133L2915 1225M2185 772l70-27M2320 1500l30 70M2310 1520l-20 50M2340 1505l55-60" />
        <path d="M500 1010l22-8 0 10-20 8z" fill="#fff" />
        <path d="M668 1285l22 55M684 1283l6 56" />
        <path d="M1360 700v28q6 24 10 0M1100 1160h26v15h-26z" />
      </g>
      <g fill="none" stroke="#78a586" strokeWidth="2.5">
        <path d="M895 102l13 22h-26zM895 132l13-22h-26zM992 102l13 22h-26zM992 132l13-22h-26z" />
      </g>
      <g fill="#6f75b3">
        {[[717, 138], [707, 339], [696, 600], [822, 880], [522, 1046], [405, 1293], [426, 1305], [312, 1615], [840, 1547], [669, 1287], [684, 1281], [690, 1341], [1185, 737], [1422, 672], [1926, 494], [1251, 730]].map(([x, y], i) => (
          <rect key={i} x={x - 6} y={y - 6} width="13" height="13" />
        ))}
      </g>
      <g transform="translate(281 1461)">
        <rect x="-22" y="-25" width="45" height="50" rx="6" fill="#f6dcc3" stroke="#c9a583" strokeWidth="2.5" />
        <text y="9" fontSize="26" textAnchor="middle" fill="#4d3a28">7</text>
      </g>

      {labels.map((l, i) => (
        <text
          key={i}
          transform={`translate(${l.x} ${l.y}) rotate(${l.r ?? 0})`}
          fontSize={l.s}
          fontStyle={l.i ? "italic" : "normal"}
          textAnchor={l.start ? "start" : "middle"}
          fill={l.c ?? "#222"}
          stroke="#fff"
          strokeOpacity="0.75"
          strokeWidth={l.r ? 2 : 5}
          paintOrder="stroke"
        >
          {l.t}
        </text>
      ))}

      <circle cx="1622" cy="588" r="14" fill="#6a7f9c" fillOpacity="0.8" />
      {bigMarkers.map(([x, y, r, c], i) => (
        <circle key={i} cx={x} cy={y} r={r} stroke={c} strokeWidth="14" strokeOpacity={i < 2 ? 0.85 : 0.92} fill={c} fillOpacity={[0.2, 0.3, 0.3, 0.5][i]} />
      ))}
      {markers.map(([x, y, r, c], i) => (
        <circle key={i} cx={x} cy={y} r={r - 6} stroke={c} strokeWidth="12" strokeOpacity="0.82" fill={c} fillOpacity={r <= 17 ? 0.85 : 0.35} />
      ))}
    </MapSvg>
  );
}

/* ---------- navigation icons ---------- */

const HomeIcon = () => (
  <svg viewBox="0 0 17 17"><path d="M8.5.5 17 9.3h-2.2V16.5h-4.2V11H7v5.5H2.6V9.3H0L2.7 6.5V2h2.2v2.2z" /></svg>
);
const PinIcon = () => (
  <svg viewBox="0.8 0 17 17"><path fillRule="evenodd" d="M8.5.3a5.7 5.7 0 0 1 5.7 5.7c0 3.6-3.2 6.4-5.7 10.7C6 12.400 2.800 9.600 2.800 6A5.700 5.700 0 0 1 8.500.3zm0 3a2.800 2.800 0 1 0 0 5.600 2.800 2.800 0 0 0 0-5.600z" /></svg>
);
const ClockIcon = () => (
  <svg viewBox="0 0 17 17"><path fillRule="evenodd" d="M8 .6a7.700 7.700 0 1 1 0 15.400A7.700 7.700 0 0 1 8 .6zm0 2a5.700 5.700 0 1 0 0 11.400A5.700 5.700 0 0 0 8 2.600zM7 4h1.500v4H12v1.500H7z" /></svg>
);
const RoadIcon = () => (
  <svg viewBox="0 0 17 17" overflow="visible"><path fillRule="evenodd" d="M4.300.5h3.400L7.500 3.500h2L9.300.5h3.400L18 16.500h-7.200L10.400 12H6.600l-.4 4.500H-1zM7.400 5l-.4 4.500h3L9.600 5z" /></svg>
);
const UserIcon = () => (
  <svg viewBox="0 0 17 17"><path d="M8.500.4c2.600 0 4 1.600 4 4.300 0 2-1 4-2 5 0 1.500 1 1.900 3.500 2.800 2 .8 2.800 1.600 2.800 4H.2c0-2.400.8-3.200 2.800-4 2.500-.9 3.500-1.300 3.500-2.800-1-1-2-3-2-5 0-2.700 1.400-4.300 4-4.300z" /></svg>
);

const navItems = [
  { label: "About", icon: HomeIcon, width: 80 },
  { label: "Map", icon: PinIcon, width: 68, active: true },
  { label: "Time", icon: ClockIcon, width: 71 },
  { label: "Transport", icon: RoadIcon, width: 103 },
  { label: "User", icon: UserIcon, width: 70 },
];

const people = [
  { name: "Czarek", width: 73, gap: 5, line: "#1256c0", bg: "linear-gradient(#5d97f7, #4285f4 60%, #3e7de6)" },
  { name: "Tymek", width: 71, gap: 4, line: "#55595c", bg: "linear-gradient(#f7c02b, #f4b400 60%, #e5a900)" },
  { name: "Wojtek", width: 76, gap: 0, line: "#0c6a3c", bg: "linear-gradient(#33ac71, #0f9d58 60%, #0e9453)" },
];

const story = [
  "Thanks to the interactivity of the map, you can easily check",
  "where each person spent new year's eve or which place has",
  "he visited most often. Of course, everybody's most visited",
  "places are home (or a dorm) and the university. As you can",
  "see, the person who travelled the most is Wojtek. He has",
  "visited such places as Berlin, Hamburg or Tri-City. Unlike him,",
  "Tymek has never left Masovia and the furthest place he has",
  "been to is Piaseczno county. Because of it, the center of",
  "Warsaw is mostly covered with yellow markers. Coming to",
  "Czarek, it can be seen that he lives outside the city and he",
  "uses Warsaw East Station a lot. On winter holidays he went to",
  "Sokołów and Toruń. Are you interested in which places we",
  "visit and how often? Use our map and try to find out yourself!",
];

export default function App() {
  return (
    <>
      <GlobalStyle />
      <NavBar>
        {navItems.map(({ label, icon: Icon, width, active }) => (
          <NavLink key={label} $active={active} $width={width}>
            <Icon />
            {label}
          </NavLink>
        ))}
      </NavBar>
      <Container>
        <Title>Map of visited places</Title>
        <Lead>Map of places we have visited in a given date range. The bigger the circle, the more visited the place is.</Lead>
        <Columns>
          <div>
            <Panel>
              <Label>Select persons:</Label>
              <ButtonRow>
                {people.map((p) => (
                  <PersonButton key={p.name} $bg={p.bg} $line={p.line} $width={p.width} $gap={p.gap}>{p.name}</PersonButton>
                ))}
              </ButtonRow>
              <Label>Select date range:</Label>
              <DateRange>
                <DateCell>2022-12-07</DateCell>
                <DateJoin>to</DateJoin>
                <DateCell>2023-01-24</DateCell>
              </DateRange>
            </Panel>
            <Story>
              {story.map((line, i) => (
                <StoryLine key={line} $last={i === story.length - 1}>{line}</StoryLine>
              ))}
            </Story>
          </div>
          <MapFrame>
            <CityMap />
            <ZoomControl>
              <ZoomButton $upper>+</ZoomButton>
              <ZoomButton>−</ZoomButton>
            </ZoomControl>
            <Attribution>
              <a>Leaflet</a> | © <a>OpenStreetMap</a> contributors, <a>CC-BY-SA</a>
            </Attribution>
          </MapFrame>
        </Columns>
      </Container>
      <Footer>Data Visualization Techniques 2023</Footer>
    </>
  );
}
